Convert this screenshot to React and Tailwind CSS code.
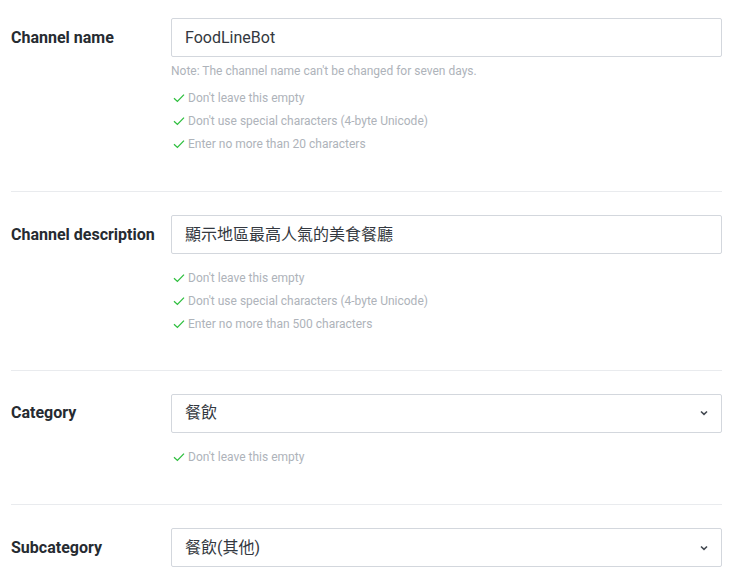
import React from "react";

function Check() {
  return (
    <svg viewBox="0 0 12 10" className="w-[12px] h-[10px] mr-[3px] shrink-0">
      <path d="M1 5.2 L4.4 8.4 L11 1.6" fill="none" stroke="#2fbf3f" strokeWidth="1.3" />
    </svg>
  );
}

function Chevron() {
  return (
    <svg viewBox="0 0 8 6" className="w-[8px] h-[6px]">
      <path d="M1 1.5 L4 4.3 L7 1.5" fill="none" stroke="#444a52" strokeWidth="1.6" />
    </svg>
  );
}

function Rules({ items }) {
  return (
    <div className="flex flex-col">
      {items.map((t) => (
        <div key={t} className="flex items-center h-[23px] pl-[2px] text-[12px] text-[#aeb3ba]">
          <Check />
          <span>{t}</span>
        </div>
      ))}
    </div>
  );
}

function Field({ label, value, select, note, rules, pad }) {
  return (
    <div className={"flex " + pad}>
      <div className="w-[160px] shrink-0 h-[39px] flex items-center text-[16px] font-bold text-[#262b31]">
        {label}
      </div>
      <div className="flex-1">
        <div className="h-[39px] border border-[#d3d7dd] rounded-[2px] flex items-center justify-between pl-[13px] pr-[13px] text-[16px] text-[#333840]">
          <span>{value}</span>
          {select && <Chevron />}
        </div>
        {note && (
          <div className="text-[12px] text-[#aeb3ba] leading-[18px] mt-[5px]">{note}</div>
        )}
        <div className={note ? "mt-[6.5px]" : "mt-[12.5px]"}>
          <Rules items={rules} />
        </div>
      </div>
    </div>
  );
}

export default function App() {
  return (
    <div
      className="w-[733px] h-[574px] overflow-hidden bg-white px-[11px]"
      style={{ fontFamily: "Roboto, 'Noto Sans CJK TC', sans-serif" }}
    >
      <Field
        pad="pt-[18px] pb-[35.5px]"
        label="Channel name"
        value="FoodLineBot"
        note="Note: The channel name can't be changed for seven days."
        rules={[
          "Don't leave this empty",
          "Don't use special characters (4-byte Unicode)",
          "Enter no more than 20 characters",
        ]}
      />
      <div className="border-t border-[#e9ebee]" />
      <Field
        pad="pt-[23px] pb-[34px]"
        label="Channel description"
        value="顯示地區最高人氣的美食餐廳"
        rules={[
          "Don't leave this empty",
          "Don't use special characters (4-byte Unicode)",
          "Enter no more than 500 characters",
        ]}
      />
      <div className="border-t border-[#e9ebee]" />
      <Field
        pad="pt-[23px] pb-[36px]"
        label="Category"
        value="餐飲"
        select
        rules={["Don't leave this empty"]}
      />
      <div className="border-t border-[#e9ebee]" />
      <Field pad="pt-[23px] pb-[35px]" label="Subcategory" value="餐飲(其他)" select rules={[]} />
    </div>
  );
}
